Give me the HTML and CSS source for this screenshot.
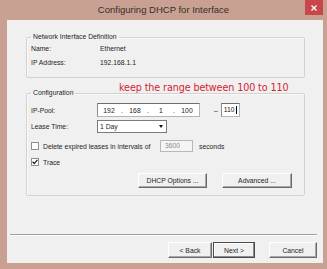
FILE: index.html
```html
<!DOCTYPE html>
<html lang="en">
  <head>
    <meta charset="UTF-8" />
    <meta name="viewport" content="width=device-width,initial-scale=1.0" />
    <title>Configuring DHCP for Interface</title>
    <link rel="stylesheet" href="styles.css">
  </head>
  <body>
    <div class="window">
      <div class="titlebar">
        <span class="title">Configuring DHCP for Interface</span>
        <span class="close">
          <svg width="6" height="6" viewBox="0 0 6 6"><path d="M0.5 0.5L5.5 5.5M5.5 0.5L0.5 5.5" stroke="#fff" stroke-width="1.3"/></svg>
        </span>
      </div>
      <div class="client">
        <fieldset class="group info">
          <legend>Network Interface Definition</legend>
          <div class="info-grid">
            <span>Name:</span><span>Ethernet</span>
            <span>IP Address:</span><span>192.168.1.1</span>
          </div>
        </fieldset>

        <p class="note">keep the range between 100 to 110</p>

        <fieldset class="group config">
          <legend>Configuration</legend>
          <div class="row row-pool">
            <span class="field-label">IP-Pool:</span>
            <div class="edit ip-box">
              <span>192</span><i>.</i><span>168</span><i>.</i><span>1</span><i>.</i><span>100</span>
            </div>
            <span class="dash">–</span>
            <div class="edit end-box">110<b class="caret"></b></div>
          </div>
          <div class="row row-lease">
            <span class="field-label">Lease Time:</span>
            <div class="combo">
              <span class="combo-text">1 Day</span>
              <span class="combo-arrow"></span>
            </div>
          </div>
          <div class="row row-check">
            <span class="checkbox"></span>
            <span class="check-text">Delete expired leases in intervals of</span>
            <div class="edit disabled-box">3600</div>
            <span class="unit">seconds</span>
          </div>
          <div class="row row-trace">
            <span class="checkbox">
              <svg width="6" height="6" viewBox="0 0 6 6"><path d="M0.6 2.8L2.3 4.6L5.4 0.9" fill="none" stroke="#222" stroke-width="1.3"/></svg>
            </span>
            <span class="check-text">Trace</span>
          </div>
          <div class="row row-buttons">
            <button type="button" class="btn btn-options">DHCP Options ...</button>
            <button type="button" class="btn btn-advanced">Advanced ...</button>
          </div>
        </fieldset>

        <div class="separator"></div>

        <div class="footer">
          <button type="button" class="btn btn-back">&lt; Back</button>
          <button type="button" class="btn btn-next">Next &gt;</button>
          <button type="button" class="btn btn-cancel">Cancel</button>
        </div>
      </div>
    </div>
  </body>
</html>
```

FILE: styles.css
```css
* {
  margin: 0;
  padding: 0;
  box-sizing: border-box;
}
html, body {
  width: 327px;
  height: 269px;
  overflow: hidden;
  font-family: "Liberation Sans", Arial, sans-serif;
  background: #c8a193;
}
.window {
  width: 327px;
  height: 269px;
  display: flex;
  flex-direction: column;
  background: #c8a193;
}
.titlebar {
  height: 20px;
  display: grid;
  grid-template-columns: 1fr auto 1fr;
}
.title {
  grid-column: 2;
  font-size: 9.5px;
  line-height: 20px;
  color: #3a2c28;
}
.close {
  grid-column: 3;
  justify-self: end;
  width: 18px;
  height: 15px;
  margin-right: 4px;
  background: #c7474b;
  display: flex;
  align-items: center;
  justify-content: center;
}
.client {
  position: relative;
  height: 243px;
  margin: 0 4px 0 7px;
  background: #f0f0f0;
  border-top: 1px solid #f7ecea;
  font-size: 6.8px;
  color: #1e1e1e;
  display: flex;
  flex-direction: column;
}
.group {
  margin: 0 18px 0 19px;
  border: 1px solid #d2d2d2;
  border-radius: 2px;
  padding: 0 0 0 4px;
  box-shadow: inset 1px 1px 0 #fafafa;
}
.group legend {
  font-size: 6.8px;
  line-height: 8px;
  padding: 0 2px;
}
.info {
  margin-top: 12px;
  padding-top: 1px;
  padding-bottom: 7px;
}
.info-grid {
  display: grid;
  grid-template-columns: 69px auto;
  grid-auto-rows: 14px;
  line-height: 14px;
}
.note {
  position: absolute;
  left: 112px;
  top: 61px;
  font-family: "DejaVu Sans", sans-serif;
  font-size: 9.6px;
  line-height: 12px;
  color: #d42230;
  letter-spacing: -0.1px;
}
.config {
  margin-top: 11px;
  padding-top: 6px;
  padding-bottom: 7px;
}
.row {
  display: flex;
  align-items: center;
}
.field-label {
  width: 66px;
}
.edit {
  background: #fff;
  border: 1px solid #b5b5b5;
  border-top-color: #6f6f6f;
  border-left-color: #8c8c8c;
}
.row-pool {
  height: 14px;
}
.ip-box {
  width: 103px;
  height: 14px;
  display: flex;
  align-items: center;
}
.ip-box span {
  width: 22px;
  text-align: center;
}
.ip-box i {
  font-style: normal;
  width: 4px;
  text-align: center;
}
.dash {
  padding: 0 3px 0 14px;
}
.end-box {
  width: 19px;
  height: 14px;
  padding-left: 2px;
  line-height: 12px;
  display: flex;
  align-items: center;
}
.caret {
  width: 1px;
  height: 8px;
  background: #000;
  margin-left: 1px;
}
.row-lease {
  height: 13px;
  margin-top: 3px;
}
.combo {
  width: 70px;
  height: 13px;
  background: #fff;
  border: 1px solid #7a7a7a;
  display: flex;
  align-items: center;
}
.combo-text {
  flex: 1;
  padding-left: 2px;
}
.combo-arrow {
  width: 10px;
  height: 11px;
  display: flex;
  align-items: center;
  justify-content: center;
}
.combo-arrow::after {
  content: "";
  border-left: 2.5px solid transparent;
  border-right: 2.5px solid transparent;
  border-top: 3px solid #111;
}
.row-check {
  height: 12px;
  margin-top: 7px;
}
.checkbox {
  width: 8px;
  height: 8px;
  background: #fff;
  border: 1px solid #8e8f8f;
  display: flex;
  align-items: center;
  justify-content: center;
}
.check-text {
  margin-left: 4px;
}
.row-check .check-text {
  width: 117px;
}
.disabled-box {
  width: 33px;
  height: 12px;
  background: #f4f4f4;
  border-color: #b8b8b8;
  color: #8d8d8d;
  padding-left: 4px;
  line-height: 10px;
}
.unit {
  margin-left: 6px;
}
.row-trace {
  height: 12px;
  margin-top: 4px;
}
.row-buttons {
  margin-top: 5px;
  justify-content: flex-end;
  gap: 15px;
  padding-right: 12px;
}
.btn {
  font-family: "Liberation Sans", Arial, sans-serif;
  font-size: 6.8px;
  color: #1e1e1e;
  height: 15px;
  background: #f0f0f0;
  border: 1px solid;
  border-color: #fff #6a6a6a #6a6a6a #fff;
  box-shadow: inset -1px -1px 0 #a8a8a8;
}
.btn-options {
  width: 69px;
}
.btn-advanced {
  width: 70px;
}
.separator {
  margin: 38px 6px 0 3px;
  border-top: 1px solid #a0a0a0;
  border-bottom: 1px solid #fff;
}
.footer {
  margin-top: 6px;
  padding-right: 6px;
  display: flex;
  justify-content: flex-end;
}
.footer .btn {
  height: 16px;
}
.btn-back {
  width: 44px;
}
.btn-next {
  width: 42px;
  margin-left: 1px;
  border: 1px solid #4a4a4a;
  box-shadow: inset -1px -1px 0 #8a8a8a, inset 1px 1px 0 #fff;
}
.btn-cancel {
  width: 48px;
  margin-left: 14px;
}
```
